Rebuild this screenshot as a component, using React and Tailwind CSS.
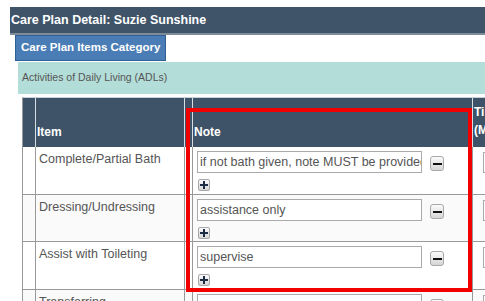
import React from "react";

const rows = [
  { item: "Complete/Partial Bath", note: "if not bath given, note MUST be provided", h: "h-[48px]", bg: "bg-white" },
  { item: "Dressing/Undressing", note: "assistance only", h: "h-[47px]", bg: "bg-[#fafafa]" },
  { item: "Assist with Toileting", note: "supervise", h: "h-[48px]", bg: "bg-white" },
  { item: "Transferring", note: "", h: "h-[48px]", bg: "bg-[#fafafa]" },
];

// small grey push buttons next to the note inputs
const MinusBtn = () => (
  <div className="w-[14px] h-[15px] rounded-[3px] border border-[#a8a8a8] bg-gradient-to-b from-[#fbfbfb] to-[#d6d6d6] flex items-center justify-center shrink-0">
    <div className="w-[9px] h-[2px] bg-[#111]" />
  </div>
);

const PlusBtn = () => (
  <div className="relative w-[12px] h-[12px] rounded-[2px] border border-[#a8a8a8] bg-gradient-to-b from-[#fbfbfb] to-[#d6d6d6]">
    <div className="absolute left-[1px] top-[4px] w-[8px] h-[2px] bg-[#1d2b44]" />
    <div className="absolute left-[4px] top-[1px] w-[2px] h-[8px] bg-[#1d2b44]" />
  </div>
);

export default function App() {
  return (
    <div
      className="relative w-[485px] h-[301px] overflow-hidden bg-white"
      style={{ fontFamily: '"Liberation Sans", Arial, sans-serif' }}
    >
      <div className="pt-[7px] pl-[10px]">
        {/* title bar */}
        <div className="h-[28px] bg-[#3f5469] border-b-2 border-[#7e8c9a] flex items-center pl-px">
          <span className="text-white font-bold text-[12.5px] whitespace-nowrap">Care Plan Detail: Suzie Sunshine</span>
        </div>

        {/* tab */}
        <div className="ml-[5px] w-[151px] h-[26px] bg-[#4a7db5] border border-[#2f5f93] flex items-center pl-[5px]">
          <span className="text-white font-bold text-[11.5px] whitespace-nowrap">Care Plan Items Category</span>
        </div>

        {/* category */}
        <div className="mt-px ml-[8px] h-[32px] bg-[#b3ddd8] flex items-center pl-[4px]">
          <span className="text-[#555] text-[10.5px] whitespace-nowrap">Activities of Daily Living (ADLs)</span>
        </div>
      </div>

      {/* table */}
      <div className="mt-[3px] ml-[22px] w-[520px]">
        <div className="flex h-[50px] bg-[#3f5368] border-t border-[#c9cfd6] border-l border-l-[#999] text-white font-bold text-[12px] leading-[14px]">
          <div className="w-[12px]" />
          <div className="w-[149px] border-l border-[#d9dee3] flex items-end pb-[8px] pl-px">Item</div>
          <div className="w-[8px] border-l border-[#d9dee3]" />
          <div className="w-[280px] border-l border-[#d9dee3] flex items-end pb-[8px] pl-px">Note</div>
          <div className="flex-1 border-l border-[#d9dee3] flex items-end pb-[8px] pl-px leading-[18px]">
            Time<br />(Minutes)
          </div>
        </div>

        {rows.map((r) => (
          <div key={r.item} className={`flex ${r.h} ${r.bg} border-b border-l border-[#999] text-[12.5px] text-[#555]`}>
            <div className="w-[12px]" />
            <div className="w-[149px] border-l border-[#999] pl-[3px] pt-[5px] leading-[14px] whitespace-nowrap">{r.item}</div>
            <div className="w-[8px] border-l border-[#999]" />
            <div className="w-[280px] border-l border-[#999] pl-[4px] pt-[4px]">
              <div className="flex items-start">
                <div className="w-[225px] h-[22px] border border-[#aaa] bg-white flex items-center px-[2px] overflow-hidden whitespace-nowrap text-[12.5px] text-[#555]">
                  {r.note}
                </div>
                <div className="ml-[8px] mt-[5px]">
                  <MinusBtn />
                </div>
              </div>
              <div className="mt-[6px] ml-px">
                <PlusBtn />
              </div>
            </div>
            <div className="flex-1 border-l border-[#999] pl-[10px] pt-[5px]">
              <div className="w-[40px] h-[21px] border border-[#aaa] bg-white" />
            </div>
          </div>
        ))}
      </div>

      {/* highlight annotation */}
      <div className="absolute left-[186px] top-[108px] w-[286px] h-[184px] border-4 border-[#f20000]" />
    </div>
  );
}
